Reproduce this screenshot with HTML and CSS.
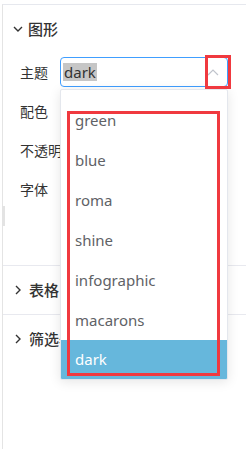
FILE: index.html
```html
<!DOCTYPE html>
<html lang="zh">
<head>
<meta charset="utf-8">
<link rel="stylesheet" href="styles.css">
</head>
<body>
<div class="panel">
  <div class="section open">
    <div class="sec-head">
      <svg class="chev" width="10" height="6" viewBox="0 0 10 6"><path d="M1 1 L5 5 L9 1" fill="none" stroke="#333" stroke-width="1.4"/></svg>
      <span class="sec-title">图形</span>
    </div>
    <div class="rows">
      <div class="row">
        <span class="label">主题</span>
        <div class="select">
          <span class="sel-text">dark</span>
          <svg class="arrow" width="12" height="7" viewBox="0 0 12 7"><path d="M1 6 L6 1 L11 6" fill="none" stroke="#c0c4cc" stroke-width="1.2"/></svg>
        </div>
      </div>
      <div class="row"><span class="label">配色</span></div>
      <div class="row"><span class="label">不透明度</span></div>
      <div class="row"><span class="label">字体</span></div>
      <div class="row tail"><span class="knob"></span></div>
    </div>
  </div>
  <div class="section">
    <div class="sec-head">
      <svg class="chev" width="6" height="10" viewBox="0 0 6 10"><path d="M1 1 L5 5 L1 9" fill="none" stroke="#333" stroke-width="1.4"/></svg>
      <span class="sec-title">表格</span>
    </div>
  </div>
  <div class="section last">
    <div class="sec-head">
      <svg class="chev" width="6" height="10" viewBox="0 0 6 10"><path d="M1 1 L5 5 L1 9" fill="none" stroke="#333" stroke-width="1.4"/></svg>
      <span class="sec-title">筛选器</span>
    </div>
  </div>
</div>

<div class="dropdown">
  <ul class="options">
    <li>green</li>
    <li>blue</li>
    <li>roma</li>
    <li>shine</li>
    <li>infographic</li>
    <li>macarons</li>
    <li class="active">dark</li>
  </ul>
</div>

<div class="mark mark-arrow"></div>
<div class="mark mark-list"></div>
</body>
</html>
```

FILE: styles.css
```css
html, body {
  margin: 0;
  padding: 0;
  background: #fff;
}
body {
  font-family: "Noto Sans CJK SC", "Noto Sans", sans-serif;
  color: #333;
  width: 246px;
  height: 449px;
  overflow: hidden;
  position: relative;
  padding-top: 4px;
  padding-left: 2px;
  box-sizing: border-box;
}
.panel {
  border-top: 1px solid #e6e8ee;
  border-left: 1px solid #e4e4e4;
  height: 445px;
  box-sizing: border-box;
}
.section {
  border-bottom: 1px solid #e8e9ef;
}
.section.last {
  border-bottom: none;
}
.sec-head {
  display: flex;
  align-items: center;
  height: 48px;
  padding-left: 12px;
  box-sizing: border-box;
}
.section.open .sec-head {
  padding-left: 10px;
}
.chev {
  display: block;
  margin-right: 5px;
}
.section:not(.open) .chev {
  margin-right: 8px;
}
.sec-title {
  font-size: 15px;
  font-weight: 500;
  color: #333;
  line-height: 20px;
}
.rows {
  display: flex;
  flex-direction: column;
  padding-left: 17px;
  padding-top: 4px;
}
.row {
  display: flex;
  align-items: center;
  height: 39px;
}
.row:first-child {
  height: 30px;
  margin-bottom: 4px;
}
.row.tail {
  height: 57px;
  position: relative;
}
.knob {
  position: absolute;
  left: -18px;
  top: -2px;
  width: 3px;
  height: 20px;
  background: #e3e3e3;
}
.label {
  width: 40px;
  font-size: 14px;
  color: #333;
  white-space: nowrap;
  line-height: 20px;
}
.select {
  width: 168px;
  height: 30px;
  box-sizing: border-box;
  border: 1px solid #409eff;
  border-radius: 4px;
  display: flex;
  align-items: center;
  justify-content: space-between;
  padding-left: 2px;
  padding-right: 8px;
}
.sel-text {
  font-family: "Noto Sans", sans-serif;
  font-size: 15px;
  line-height: 18px;
  background: #c6c6c6;
  color: #333;
  padding: 0 1px;
}
.arrow {
  display: block;
}
.dropdown {
  position: absolute;
  left: 60px;
  top: 89px;
  width: 168px;
  height: 291px;
  background: #fff;
  border: 1px solid #e4e7ed;
  border-radius: 2px;
  box-sizing: border-box;
  box-shadow: 0 2px 12px rgba(0, 0, 0, 0.1);
  overflow: hidden;
}
.options {
  list-style: none;
  margin: 0;
  padding: 10px 0 0 0;
}
.options li {
  height: 40px;
  line-height: 40px;
  padding-left: 14px;
  font-family: "Noto Sans", sans-serif;
  font-size: 15px;
  color: #606266;
}
.options li.active {
  background: #66b7dc;
  color: #fff;
  height: 39px;
  line-height: 39px;
}
.mark {
  position: absolute;
  border: 3px solid #f0393f;
  box-sizing: border-box;
}
.mark-arrow {
  left: 205px;
  top: 55px;
  width: 26px;
  height: 34px;
}
.mark-list {
  left: 67px;
  top: 111px;
  width: 153px;
  height: 265px;
}
```
